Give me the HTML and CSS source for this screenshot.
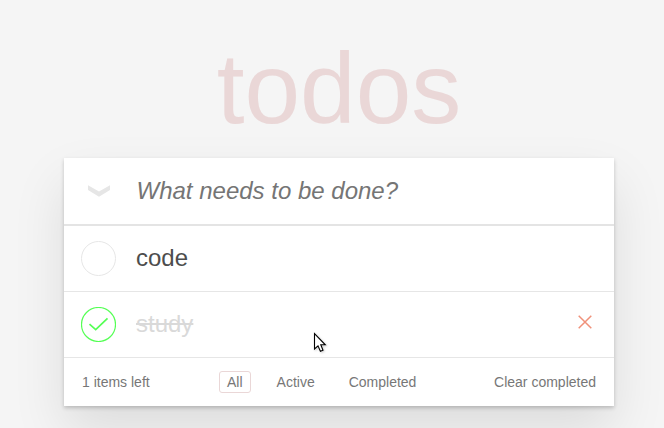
FILE: index.html
```html
<!DOCTYPE html>
<html lang="en">
<head>
<meta charset="utf-8">
<title>todos</title>
<link rel="stylesheet" href="styles.css">
</head>
<body>
<main class="app">
  <h1 class="title">todos</h1>
  <section class="card">
    <header class="row entry">
      <span class="lead"><svg class="chevron" viewBox="0 0 24 12" width="24" height="12"><path d="M1 0.3L12 6.5L23 0.3V5L12 11.7L1 5Z"/></svg></span>
      <input class="new-todo" placeholder="What needs to be done?">
    </header>
    <ul class="list">
      <li class="row item">
        <span class="lead"><svg width="35" height="35" viewBox="0 0 35 35"><circle class="ring" cx="17.5" cy="17.5" r="17"/></svg></span>
        <span class="label">code</span>
      </li>
      <li class="row item done">
        <span class="lead"><svg width="35" height="35" viewBox="0 0 35 35"><circle class="ring" cx="17.5" cy="17.5" r="17"/><path class="tick" d="M8.5 17.2L14.7 22.7L26.5 11.3"/></svg></span>
        <span class="label">study</span>
        <button class="remove" aria-label="Remove"><svg width="14" height="14" viewBox="0 0 14 14"><path d="M0.7 0.7L13.3 13.3M13.3 0.7L0.7 13.3"/></svg></button>
      </li>
    </ul>
    <footer class="footer">
      <span class="count">1 items left</span>
      <nav class="filters"><a class="filter selected">All</a><a class="filter">Active</a><a class="filter">Completed</a></nav>
      <span class="clear">Clear completed</span>
    </footer>
  </section>
</main>
<svg class="cursor" width="14" height="21" viewBox="0 0 14 21"><path d="M1.5 1.5V17L5 13.8L7.4 19.3L10 18.2L7.8 12.8H12.3Z"/></svg>
</body>
</html>
```

FILE: styles.css
```css
* { box-sizing: border-box; }
body { margin: 0; height: 428px; overflow: hidden; background: #f5f5f5; font: 14px/20px "Liberation Sans", Arial, sans-serif; color: #777; }
.app { width: 550px; margin-left: 64px; }
.title { margin: 0; height: 158px; padding-top: 31px; font-size: 100px; line-height: 115px; font-weight: 400; text-align: center; color: #ead7d7; }
.card { background: #fff; height: 248px; box-shadow: 0 2px 4px rgba(0,0,0,.2), 0 25px 50px rgba(0,0,0,.1); }
.row { display: flex; align-items: center; height: 66px; border-bottom: 1px solid #e6e6e6; font-size: 24px; }
.entry { height: 68px; border-bottom: 2px solid #e4e4e4; }
.lead { width: 72px; padding-left: 17px; display: flex; }
.entry .lead { padding-left: 23px; }
.chevron { fill: #e6e6e6; }
.new-todo { border: 0; padding: 0 0 0 0.5px; outline: 0; width: 400px; font: 24px "Liberation Sans", Arial, sans-serif; background: none; }
.new-todo::placeholder { font-style: italic; color: #757575; opacity: 1; }
.list { margin: 0; padding: 0; list-style: none; }
.item { align-items: flex-start; padding-top: 15px; }
.ring { fill: none; stroke: #e6e6e6; }
.label { color: #4d4d4d; flex: 1; line-height: 29px; padding-top: 2px; }
.done .label { color: #d9d9d9; text-decoration: line-through; }
.done .ring { stroke: #5f5; stroke-width: 1.2; }
.tick { fill: none; stroke: #5f5; stroke-width: 1.7; }
.remove { border: 0; background: none; padding: 0; margin: 8px 22px 0 0; display: flex; }
.remove path { fill: none; stroke: #f0917a; stroke-width: 1.5; }
.footer { height: 48px; padding: 0 18px; display: grid; grid-template-columns: 137px 1fr auto; align-items: center; }
.filters { display: flex; gap: 18px; }
.filter { border: 1px solid transparent; padding: 0 7px; border-radius: 3px; }
.selected { border-color: #ead7d7; }
.cursor { position: absolute; left: 313px; top: 332px; fill: #fff; stroke: #000; stroke-width: 1.1; filter: drop-shadow(1px 1px 1px rgba(0,0,0,.2)); }
```
